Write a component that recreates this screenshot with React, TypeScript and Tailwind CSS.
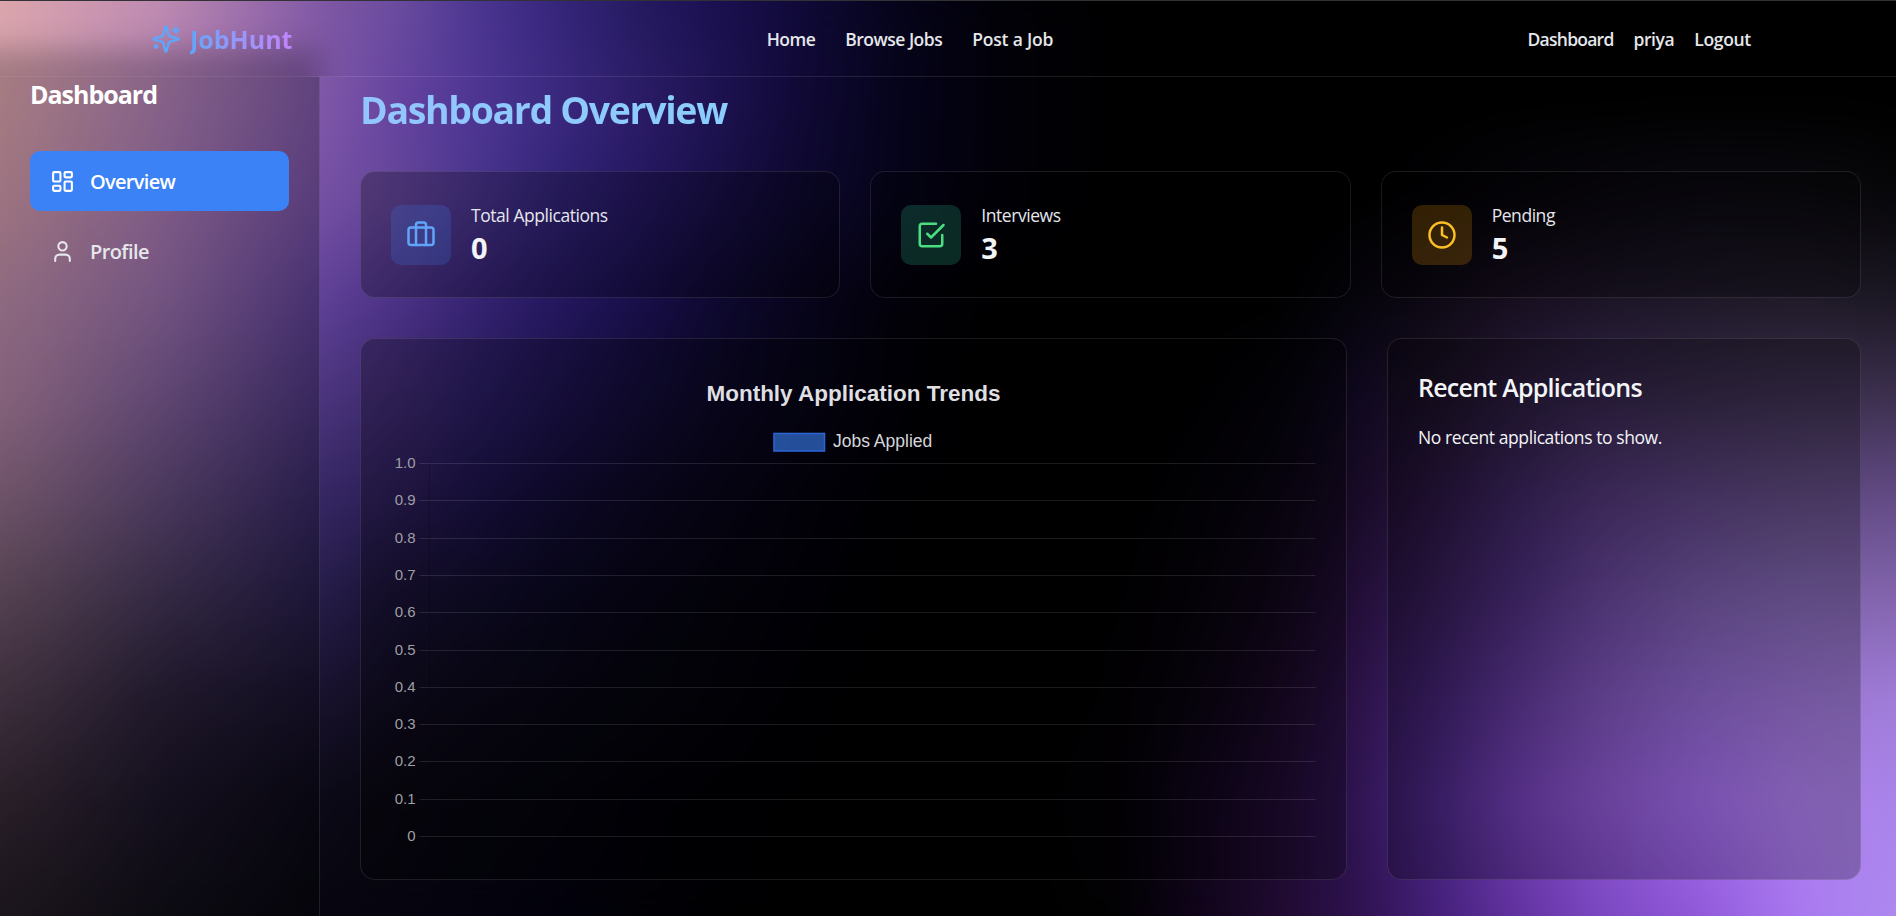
import { Briefcase, Clock, LayoutDashboard, User } from "lucide-react";
import type { ReactNode } from "react";

/* ---------- wallpaper: colour mesh, interpolated between knots ---------- */

const knotX = [0, 160, 320, 400, 480, 560, 640, 720, 800, 900, 1000, 1120, 1200, 1280, 1360, 1440, 1520, 1600, 1700, 1800, 1896];
const knotY = [0, 100, 200, 300, 400, 500, 600, 700, 800, 916];
const mesh = [
  "dba6ac bf8bb0 8058a4 6a4c9e 4a3590 35257a 241a60 1a1050 100a38 06041a 020108 000000 000000 000000 000000 000000 000000 000000 000000 000000 000000",
  "dea6ae b383b8 8058a8 6442a0 4c3592 3a287e 2c1c66 1d1250 100936 05031a 020108 000000 000000 000000 000000 000000 000000 000000 000000 000000 000000",
  "d39caa aa7bb4 7550a4 634598 47338c 302275 241660 170f46 0d082e 050318 020108 000000 000000 000000 000000 020104 06040a 09070e 0c0a12 0b0a10 08070a",
  "bf8eab 9a70ac 5e4096 4a3085 33216f 23165c 170e48 0d082e 07041b 020108 000000 000000 000000 000000 06040c 0e0914 180f20 1c1426 1e1828 201a28 1c1824",
  "b384a5 7f5e98 4a347c 3c286c 281c60 1c124c 120c36 0b0724 060416 010107 000000 000000 010002 04030a 100820 1b1126 291b3c 33244a 382b4b 3c3050 3e3150",
  "94708b 634b7b 342662 2a1c54 1a1146 100b32 0b0722 070416 03020c 000003 000000 000000 030207 0a0512 180a26 291540 3b2560 503575 5a4280 604a80 644c88",
  "70576a 443658 251c48 171030 0f0c28 09071e 070514 04030d 020108 000001 000000 010002 06030a 100618 220e38 351c55 4b2d7a 654598 785ba8 8066b0 8465ae",
  "533f51 292038 18112c 0f0b1f 0a0816 070612 05040d 030209 010004 000000 000000 020103 0a0410 180824 2c1248 402270 603898 7c52b6 9068d0 9c74d6 a07ed8",
  "382b37 1b1528 0b0916 08060f 06050e 04030c 020107 010004 000002 000000 000000 030105 10051c 1e0a30 2f1452 4b2885 7340b5 8d58d0 a36dee b080f0 a884e8",
  "251c27 110f18 07060f 06050f 04030e 02010c 010106 000003 000000 000000 000000 020103 10041a 200b30 2e1250 45207a 6232a0 7a46c0 9058d8 a878f0 ae8af0",
].map((row) => row.split(" ").map((h) => [0, 2, 4].map((i) => parseInt(h.slice(i, i + 2), 16))));

const STRIP = 4;
const strips = Array.from({ length: 916 / STRIP }, (_, i) => {
  const y = i * STRIP + STRIP / 2;
  let k = 0;
  while (k < knotY.length - 2 && y > knotY[k + 1]) k++;
  const t = (y - knotY[k]) / (knotY[k + 1] - knotY[k]);
  const stops = knotX.map((x, c) => {
    const rgb = mesh[k][c].map((v, n) => (v + (mesh[k + 1][c][n] - v) * t).toFixed(1));
    return `rgb(${rgb.join(" ")}) ${x}px`;
  });
  return `linear-gradient(to right, ${stops.join(",")})`;
});

function Strips({ className }: { className: string }) {
  return (
    <div className={className} aria-hidden="true">
      {strips.map((backgroundImage, i) => (
        <div key={i} className="h-1" style={{ backgroundImage }} />
      ))}
    </div>
  );
}

function Wallpaper() {
  return (
    <div className="absolute inset-0 overflow-hidden">
      <Strips className="absolute inset-0" />
      <Strips className="absolute inset-0 blur-[18px]" />
    </div>
  );
}

/* ---------- icons ---------- */

function SparklesIcon() {
  return (
    <svg className="size-[30px] text-[#60a5fa]" viewBox="0 0 24 24" fill="none" stroke="currentColor" strokeWidth="2" strokeLinecap="round" strokeLinejoin="round">
      <path d="M9.937 15.5A2 2 0 0 0 8.5 14.063l-6.135-1.582a.5.5 0 0 1 0-.962L8.5 9.936A2 2 0 0 0 9.937 8.5l1.582-6.135a.5.5 0 0 1 .963 0L14.063 8.5A2 2 0 0 0 15.5 9.937l6.135 1.581a.5.5 0 0 1 0 .964L15.5 14.063a2 2 0 0 0-1.437 1.437l-1.582 6.135a.5.5 0 0 1-.963 0z" />
      <path d="M20 3v4M22 5h-4M4 17v2M5 18H3" />
    </svg>
  );
}

function CheckSquareIcon() {
  return (
    <svg className="size-[30px]" viewBox="0 0 24 24" fill="none" stroke="currentColor" strokeWidth="2" strokeLinecap="round" strokeLinejoin="round">
      <path d="m9 11 3 3L22 4" />
      <path d="M21 12v7a2 2 0 0 1-2 2H5a2 2 0 0 1-2-2V5a2 2 0 0 1 2-2h11" />
    </svg>
  );
}

/* ---------- page parts ---------- */

function Header() {
  return (
    <header className="relative flex h-[77px] shrink-0 items-center justify-between border-t border-b border-t-[#323136] border-b-white/10 pr-[145px] pl-[151px] text-[17.5px] font-semibold text-gray-200">
      <div className="absolute inset-x-0 top-0 -bottom-px overflow-hidden">
        <div className="absolute top-12 -left-16 h-40 w-96 bg-black/25 blur-[15px]" />
      </div>
      <div className="relative flex items-center gap-[9px]">
        <SparklesIcon />
        <span className="bg-gradient-to-r from-[#60a5fa] to-[#c084fc] bg-clip-text pt-0.5 text-[25px] leading-[35px] font-bold text-transparent">JobHunt</span>
      </div>
      <nav className="relative flex gap-[30px] pt-0.5">
        <a className="tracking-[-0.55px]">Home</a>
        <a className="tracking-[-0.5px]">Browse Jobs</a>
        <a className="tracking-[-0.2px]">Post a Job</a>
      </nav>
      <div className="relative flex gap-5 pt-0.5">
        <a className="tracking-[-0.75px]">Dashboard</a>
        <a className="tracking-[-0.45px]">priya</a>
        <a className="tracking-[-0.3px]">Logout</a>
      </div>
    </header>
  );
}

function Sidebar() {
  return (
    <aside className="w-80 shrink-0 border-r border-white/10 bg-black/25 px-[30px]">
      <h2 className="text-[25px] leading-[35px] font-bold tracking-[-1px] text-white">Dashboard</h2>
      <nav className="mt-[39px] flex flex-col gap-[10px] text-xl font-semibold">
        <a className="flex h-[60px] items-center gap-[15px] rounded-[10px] bg-[#3b82f6] px-5 text-white">
          <LayoutDashboard className="size-[25px]" />
          <span className="pt-0.5 tracking-[-0.7px]">Overview</span>
        </a>
        <a className="flex h-[60px] items-center gap-[15px] rounded-[10px] px-5 text-gray-200">
          <User className="size-[25px]" />
          <span className="pt-0.5 tracking-[-0.6px]">Profile</span>
        </a>
      </nav>
    </aside>
  );
}

function StatCard({ tile, icon, label, value }: { tile: string; icon: ReactNode; label: string; value: string }) {
  return (
    <div className="flex items-center gap-5 rounded-[15px] border border-white/10 bg-black/25 px-[30px]">
      <div className={`flex size-[60px] items-center justify-center rounded-[10px] ${tile}`}>{icon}</div>
      <div className="pt-px">
        <p className="text-[17.5px] leading-[25px] tracking-[-0.45px] text-gray-200">{label}</p>
        <p className="text-[29px] leading-10 font-bold text-gray-100">{value}</p>
      </div>
    </div>
  );
}

function TrendsChart() {
  const top = 463.5;
  const step = 37.3;
  return (
    <svg viewBox="391 369 925 480" className="h-[480px] w-[925px] font-['Liberation_Sans',Arial,sans-serif]">
      <text x="853.5" y="400.5" textAnchor="middle" fontSize="22.5" fontWeight="700" fill="#dfdfe2">
        Monthly Application Trends
      </text>
      <rect x="774" y="433.5" width="50.5" height="17.5" fill="#3b82f6" fillOpacity="0.6" stroke="#2c63d2" strokeWidth="1.6" />
      <text x="833" y="447" fontSize="17.5" fill="#d6d6da">
        Jobs Applied
      </text>
      {Array.from({ length: 11 }, (_, i) => {
        const y = Math.floor(top + i * step) + 0.5;
        return (
          <g key={i}>
            <line x1="419.5" x2="1315.5" y1={y} y2={y} stroke="#ffffff" strokeOpacity="0.11" />
            <text x="415.5" y={y + 4.2} textAnchor="end" fontSize="15" fill="#9f9fa4">
              {i === 10 ? "0" : (1 - i / 10).toFixed(1)}
            </text>
          </g>
        );
      })}
      <line x1="429.5" x2="429.5" y1="463" y2="846" stroke="#000000" strokeOpacity="0.2" />
    </svg>
  );
}

export default function App() {
  return (
    <div className="relative h-[916px] w-full overflow-hidden bg-black font-['Open_Sans','Noto_Sans',sans-serif]">
      <Wallpaper />
      <div className="relative flex h-full flex-col">
        <Header />
        <div className="flex flex-1">
          <Sidebar />
          <main className="flex flex-1 flex-col pt-[10px] pr-[35px] pl-10">
            <h1 className="bg-gradient-to-r from-[#93c5fd] to-[#67e8f9] bg-clip-text text-[37.5px] leading-[45px] font-bold tracking-[-1.35px] text-transparent">Dashboard Overview</h1>
            <section className="mt-[39px] grid h-[127px] grid-cols-3 gap-[30px]">
              <StatCard tile="bg-[#3b82f6]/20 text-[#60a5fa]" icon={<Briefcase className="size-[30px]" />} label="Total Applications" value="0" />
              <StatCard tile="bg-[#34d399]/20 text-[#4ade80]" icon={<CheckSquareIcon />} label="Interviews" value="3" />
              <StatCard tile="bg-[#f59e0b]/20 text-[#fbbf24]" icon={<Clock className="size-[30px]" />} label="Pending" value="5" />
            </section>
            <section className="mt-10 flex h-[542px] gap-10">
              <div className="w-[987px] rounded-[15px] border border-white/10 bg-black/25 p-[30px]">
                <TrendsChart />
              </div>
              <div className="flex-1 rounded-[15px] border border-white/10 bg-black/25 p-[30px] text-gray-100">
                <h3 className="pt-px text-[25px] leading-[35px] font-semibold tracking-[-0.75px]">Recent Applications</h3>
                <p className="mt-5 text-[17.5px] leading-[25px] tracking-[-0.42px]">No recent applications to show.</p>
              </div>
            </section>
          </main>
        </div>
      </div>
    </div>
  );
}
